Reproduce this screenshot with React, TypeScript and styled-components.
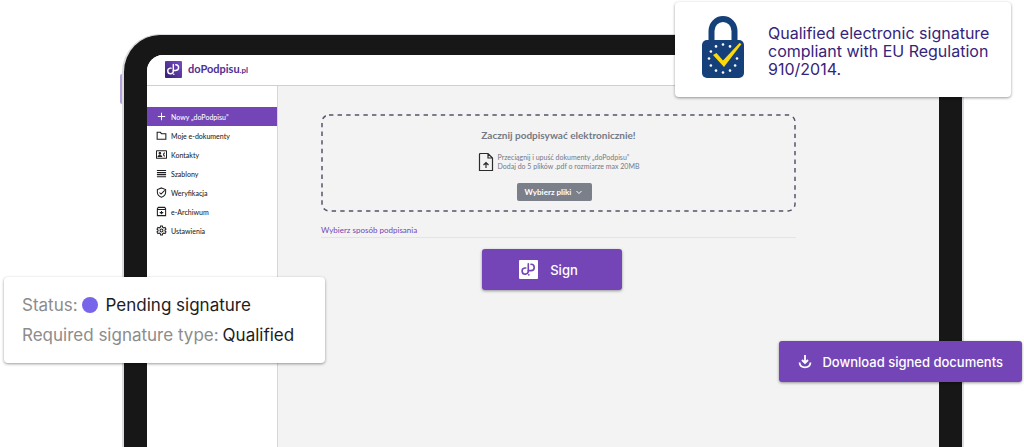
import React from 'react';
import styled, { createGlobalStyle, css } from 'styled-components';

const nunito = '"Lato", "Open Sans", sans-serif';
const montserrat = '"Inter", "Liberation Sans", sans-serif';
const purple = '#7345b6';

const GlobalStyle = createGlobalStyle`
  *, *::before, *::after { box-sizing: border-box; }
  body { margin: 0; background: #fff; font-family: ${nunito}; color: #222; }
  h1, p, ul, dl, dd { margin: 0; padding: 0; }
  button { font: inherit; border: 0; cursor: pointer; }
`;

const Page = styled.main`
  position: relative;
  display: flex;
  min-height: 100vh;
  padding: 34px 60px 0 122px;
  overflow: hidden;
`;

const Tablet = styled.div`
  position: relative;
  flex: 1;
  display: flex;
  padding: 20px 23px 0 23px;
  background: #171717;
  border: solid #dcdce0;
  border-width: 1px 2px 0 2px;
  border-radius: 38px 38px 0 0;

  &::before {
    content: '';
    position: absolute;
    top: 39px;
    left: -4px;
    width: 2px;
    height: 30px;
    border-radius: 2px 0 0 2px;
    background: #b7a3dc;
  }
`;

const Screen = styled.div`
  flex: 1;
  display: flex;
  flex-direction: column;
  background: #f3f3f3;
  border-radius: 16px 16px 0 0;
  overflow: hidden;
`;

const Header = styled.header`
  display: flex;
  align-items: center;
  gap: 6px;
  height: 31px;
  padding: 0 18px 2px;
  background: #fff;
  border-bottom: 1px solid #cfcfcf;
`;

const Brand = styled.a`
  color: #4f2e93;
  font-size: 11px;
  line-height: 14px;
  font-weight: 700;
  text-decoration: none;
  small { font-size: 8px; }
`;

const Workspace = styled.div`
  flex: 1;
  display: flex;
`;

const Sidebar = styled.nav`
  width: 131px;
  padding-top: 21px;
  background: #fff;
  border-right: 1px solid #d6d6d6;
  ul { list-style: none; }
`;

const NavLink = styled.a<{ $active?: boolean }>`
  display: flex;
  align-items: center;
  gap: 4px;
  height: 19px;
  padding-left: 9px;
  font-size: 7px;
  line-height: 10px;
  font-weight: 500;
  text-decoration: none;
  color: #1f1f1f;
  ${p => p.$active && css`
    background: ${purple};
    color: #fff;
  `}
`;

const Content = styled.section`
  flex: 1;
  padding: 28px 143px 24px 43px;
`;

const DropZone = styled.div`
  position: relative;
  display: flex;
  flex-direction: column;
  align-items: center;
  height: 98px;
  padding-top: 14px;
  color: #747985;
`;

const DashedOutline = styled.svg`
  position: absolute;
  inset: 0;
  width: 100%;
  height: 100%;
  overflow: visible;
  pointer-events: none;

  rect {
    width: calc(100% - 2px);
    height: calc(100% - 2px);
  }
`;

const Title = styled.h1`
  font-size: 10px;
  line-height: 14px;
  font-weight: 700;
`;

const Hint = styled.div`
  display: flex;
  align-items: center;
  gap: 4px;
  margin-top: 10px;
  font-size: 7px;
  line-height: 9px;
`;

const Centered = styled.div<{ $shift: number; $top: number }>`
  display: flex;
  justify-content: center;
  padding-right: ${p => p.$shift}px;
  margin-top: ${p => p.$top}px;
`;

const PickButton = styled.button`
  display: flex;
  align-items: center;
  justify-content: center;
  gap: 4px;
  width: 75px;
  height: 18px;
  padding: 0;
  border-radius: 2px;
  background: #7b7f8a;
  color: #fff;
  font-size: 8px;
  font-weight: 700;
`;

const SectionLabel = styled.p`
  margin-top: 13px;
  padding-bottom: 2px;
  border-bottom: 1px solid #e4e4e6;
  color: ${purple};
  font-size: 8px;
  line-height: 10px;
`;

const purpleButton = css`
  display: flex;
  align-items: center;
  height: 41px;
  border-radius: 3px;
  background: ${purple};
  color: #fff;
  font-family: ${montserrat};
  font-weight: 500;
  box-shadow: 0 1px 3px rgba(0, 0, 0, 0.4);
`;

const SignButton = styled.button`
  ${purpleButton}
  justify-content: center;
  gap: 12px;
  width: 140px;
  padding: 0 6px 0 0;
  font-size: 13px;
`;

const DownloadButton = styled.button`
  ${purpleButton}
  position: absolute;
  top: 341px;
  right: 2px;
  gap: 10px;
  padding: 0 19px;
  font-size: 13px;
`;

const Card = styled.div`
  position: absolute;
  background: #fff;
  border-radius: 4px;
  font-family: ${montserrat};
  box-shadow: 0 1px 3px rgba(0, 0, 0, 0.4);
`;

const ComplianceCard = styled(Card)`
  top: 2px;
  right: 13px;
  display: flex;
  align-items: flex-start;
  gap: 24px;
  width: 336px;
  height: 95px;
  padding: 14px 0 0 27px;
  color: #35247c;
  font-size: 16px;
  line-height: 18px;
  p { flex: 1; padding-top: 8px; }
`;

const StatusCard = styled(Card)`
  top: 277px;
  left: 4px;
  width: 321px;
  padding: 13px 18px;
  font-size: 17px;
  line-height: 30px;
  color: #8c8c8c;
  div { display: flex; align-items: center; gap: 4px; }
  dd { display: flex; align-items: center; gap: 8px; color: #1d1d1f; }
`;

const Dot = styled.i`
  width: 16px;
  height: 16px;
  border-radius: 50%;
  background: #7766ea;
`;

const LogoMark = ({ size, fg, bg }: { size: number; fg: string; bg: string }) => (
  <svg width={size} height={size} viewBox="0 0 19 19" aria-hidden="true">
    <defs>
      <linearGradient id="brandGradient" x1="0" y1="1" x2="1" y2="0">
        <stop offset="0" stopColor="#35206f" />
        <stop offset="1" stopColor="#7a4bc8" />
      </linearGradient>
    </defs>
    <rect width="19" height="19" rx="1" fill={bg} />
    <g fill="none" stroke={fg} strokeWidth="1.6" strokeLinecap="round">
      <path d="M6.800 8H5.800a3.100 3.100 0 1 0 3.500 3.100V3.800" />
      <path d="M12 4.200a3.200 3.200 0 1 1 0 6.400H9.300" />
    </g>
    <circle cx="9.8" cy="14.800" r="0.9" fill={fg} />
  </svg>
);

const icons: Record<string, React.ReactNode> = {
  plus: <path d="M12 4v16M4 12h16" />,
  folder: <path d="M2.500 5h7l2.500 3h9.500v12h-19z" />,
  contacts: (
    <>
      <rect x="1" y="4" width="22" height="16" rx="1" />
      <circle cx="8.500" cy="9.500" r="1.800" fill="currentColor" />
      <path d="M4.500 16.500c1-3 7-3 8 0zM19.500 8c-4 1-4 7 0 8" />
    </>
  ),
  rows: <path d="M2 5.500h20M2 10h20M2 14.500h20M2 19h20" strokeWidth="2.500" />,
  shield: <path d="M12 2l9 3.500v6c0 5-3.500 9-9 11-5.500-2-9-6-9-11v-6zM7.500 12l3.500 3.500 8-8" />,
  archive: (
    <>
      <path d="M5 3h14l2 3v15H3V6zM3 7.500h18" />
      <path d="M12 11v5M9.500 14l2.500 3 2.500-3z" />
    </>
  ),
  gear: (
    <>
      <path d="M10 2h4l.6 3 2.300 1.300 2.900-1 2 3.500L19.500 11v2l2.300 2.200-2 3.500-2.900-1L14.600 19l-.6 3h-4l-.6-3-2.300-1.300-2.900 1-2-3.500L4.500 13v-2L2.200 8.800l2-3.500 2.900 1L9.400 5z" />
      <circle cx="12" cy="12" r="3.200" />
    </>
  ),
};

const Icon = ({ name }: { name: string }) => (
  <svg width="11" height="11" viewBox="0 0 24 24" fill="none" stroke="currentColor" strokeWidth="2.300" aria-hidden="true">
    {icons[name]}
  </svg>
);

const navItems = [
  { icon: 'plus', label: 'Nowy „doPodpisu”' },
  { icon: 'folder', label: 'Moje e-dokumenty' },
  { icon: 'contacts', label: 'Kontakty' },
  { icon: 'rows', label: 'Szablony' },
  { icon: 'shield', label: 'Weryfikacja' },
  { icon: 'archive', label: 'e-Archiwum' },
  { icon: 'gear', label: 'Ustawienia' },
];

const stars = Array.from({ length: 12 }, (_, i) => {
  const a = (i * Math.PI) / 6;
  return { x: 21 + 14 * Math.sin(a), y: 42.5 - 14 * Math.cos(a) };
}).filter((_, i) => i !== 2);

const Padlock = () => (
  <svg width="42" height="63" viewBox="0 0 42 63" aria-hidden="true">
    <path d="M9.500 28V15a11.500 12 0 0 1 23 0v13" fill="none" stroke="#15407a" strokeWidth="6" />
    <rect y="24" width="42" height="38" rx="5" fill="#15407a" />
    {stars.map((s, i) => <circle key={i} cx={s.x} cy={s.y} r="1.300" fill="#fff" />)}
    <path d="M11 39l3.500-2 6.500 7.500L37.500 27l2 1L22 51z" fill="#fbd90b" />
  </svg>
);

export default function App() {
  return (
    <>
      <GlobalStyle />
      <Page>
        <Tablet>
          <Screen>
            <Header>
              <LogoMark size={17} fg="#fff" bg="url(#brandGradient)" />
              <Brand href="#">doPodpisu<small>.pl</small></Brand>
            </Header>
            <Workspace>
              <Sidebar>
                <ul>
                  {navItems.map((item, i) => (
                    <li key={item.label}>
                      <NavLink href="#" $active={i === 0}>
                        <Icon name={item.icon} />
                        {item.label}
                      </NavLink>
                    </li>
                  ))}
                </ul>
              </Sidebar>
              <Content>
                <DropZone>
                  <DashedOutline aria-hidden="true">
                    <rect x="1" y="1" rx="7" fill="none" stroke="#53566b" strokeWidth="1.500" strokeDasharray="4.400 4.200" />
                  </DashedOutline>
                  <Title>Zacznij podpisywać elektronicznie!</Title>
                  <Hint>
                    <svg width="16" height="20" viewBox="0 0 16 20" fill="none" stroke="#2b2b2b" strokeWidth="1.200" aria-hidden="true">
                      <path d="M2 1.500h8l4.500 4.500v12.500H1.500V2zM10 1.500V6h4.500M8 16v-5M5.500 13L8 10.500l2.500 2.500" />
                    </svg>
                    <p>
                      Przeciągnij i upuść dokumenty „doPodpisu”<br />
                      Dodaj do 5 plików .pdf o rozmiarze max 20MB
                    </p>
                  </Hint>
                  <Centered $shift={9} $top={11}>
                    <PickButton type="button">
                      Wybierz pliki
                      <svg width="8" height="8" viewBox="0 0 8 8" fill="none" stroke="currentColor" aria-hidden="true">
                        <path d="M1.500 3L4 5.500 6.500 3" />
                      </svg>
                    </PickButton>
                  </Centered>
                </DropZone>
                <SectionLabel>Wybierz sposób podpisania</SectionLabel>
                <Centered $shift={14} $top={11}>
                  <SignButton type="button">
                    <LogoMark size={19} fg={purple} bg="#fff" />
                    Sign
                  </SignButton>
                </Centered>
              </Content>
            </Workspace>
          </Screen>
        </Tablet>
        <ComplianceCard>
          <Padlock />
          <p>Qualified electronic signature<br />compliant with EU Regulation<br />910/2014.</p>
        </ComplianceCard>
        <StatusCard as="dl">
          <div>
            <dt>Status:</dt>
            <dd><Dot />Pending signature</dd>
          </div>
          <div>
            <dt>Required signature type:</dt>
            <dd>Qualified</dd>
          </div>
        </StatusCard>
        <DownloadButton type="button">
          <svg width="14" height="15" viewBox="0 0 14 15" fill="none" stroke="currentColor" strokeWidth="1.800" aria-hidden="true">
            <path d="M7 1v8M4 6l3 3 3-3M1.500 8.500c.6 6.500 10.400 6.500 11 0" />
          </svg>
          Download signed documents
        </DownloadButton>
      </Page>
    </>
  );
}
